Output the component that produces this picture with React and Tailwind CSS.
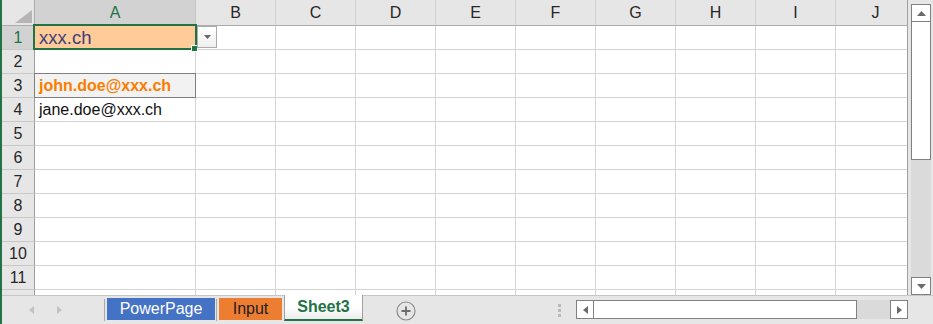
const cols = ['A', 'B', 'C', 'D', 'E', 'F', 'G', 'H', 'I', 'J'];
const rows = [1, 2, 3, 4, 5, 6, 7, 8, 9, 10, 11];

function Cell({ row, col }) {
    if (col === 'A' && row === 1) {
        return (
            <div className="flex items-center pl-[4px] pt-[1px] bg-[#ffcc99] text-[#3f3f76] text-[18.5px] border-r border-b border-[#d4d4d4]">
                xxx.ch
            </div>
        );
    }
    if (col === 'A' && row === 3) {
        return (
            <div className="flex items-center pl-[4px] bg-[#f2f2f2] text-[#fa7d00] font-bold border-r border-b border-[#d4d4d4]">
                john.doe@xxx.ch
            </div>
        );
    }
    if (col === 'A' && row === 4) {
        return (
            <div className="flex items-center pl-[4px] text-[#111] border-r border-b border-[#d4d4d4] whitespace-nowrap">
                jane.doe@xxx.ch
            </div>
        );
    }
    return <div className="border-r border-b border-[#d4d4d4]" />;
}

function Sheet() {
    return (
        <div className="relative w-[906px] h-full overflow-hidden border-r border-[#a0a0a0] bg-white">
            <div className="grid grid-cols-[33px_161px_repeat(9,80px)] grid-rows-[26px_repeat(11,24px)_5px] w-[914px] h-full">
                {/* Corner */}
                <div className="relative bg-[#e6e6e6] border-r border-b border-[#ababab]">
                    <svg className="absolute left-[13px] top-[10px]" width="17" height="13" viewBox="0 0 17 13">
                        <polygon points="17,0 17,13 0,13" fill="#b5b5b5" />
                    </svg>
                </div>
                {cols.map((c) => (
                    <div
                        key={c}
                        className={
                            c === 'A'
                                ? 'flex items-center justify-center bg-[#d2d2d2] text-[#217346] border-r border-[#c4c4c4] border-b border-b-[#ababab]'
                                : 'flex items-center justify-center bg-[#e6e6e6] text-[#262626] border-r border-[#cfcfcf] border-b border-b-[#ababab]'
                        }
                    >
                        {c}
                    </div>
                ))}

                {rows.map((r) => (
                    <div key={r} className="contents">
                        <div
                            className={
                                r === 1
                                    ? 'flex items-center justify-center bg-[#d2d2d2] text-[#217346] border-b border-[#c8c8c8] border-r border-r-[#9e9e9e]'
                                    : 'flex items-center justify-center bg-[#e6e6e6] text-[#262626] border-b border-[#c8c8c8] border-r border-r-[#9e9e9e]'
                            }
                        >
                            {r}
                        </div>
                        {cols.map((c) => (
                            <Cell key={c} row={r} col={c} />
                        ))}
                    </div>
                ))}

                <div className="bg-[#e6e6e6] border-r border-[#9e9e9e]" />
                {cols.map((c) => (
                    <div key={c} className="border-r border-[#d4d4d4]" />
                ))}
            </div>

            {/* A3 cell style border */}
            <div className="absolute left-[32px] top-[73px] w-[162px] h-[25px] border border-[#7f7f7f] pointer-events-none" />

            {/* Selection box on A1 */}
            <div className="absolute left-[31px] top-[24px] w-[164px] h-[26px] border-2 border-[#217346] pointer-events-none" />
            <div className="absolute left-[189px] top-[45px] w-[7px] h-[7px] bg-[#217346] border border-white" />

            {/* Data validation dropdown */}
            <div className="absolute left-[195px] top-[26px] w-[20px] h-[22px] border border-[#ababab] bg-linear-to-b from-white to-[#efefef] flex items-center justify-center">
                <svg width="7" height="4" viewBox="0 0 7 4">
                    <polygon points="0,0 7,0 3.5,4" fill="#666" />
                </svg>
            </div>
        </div>
    );
}

function VScroll() {
    return (
        <div className="w-[25px] h-full pl-[3px] pt-[4px]">
            <div className="w-[20px] h-[291px] flex flex-col bg-[#dadada]">
                <div className="h-[18px] bg-white border border-[#808080] flex items-center justify-center">
                    <svg width="9" height="5" viewBox="0 0 9 5">
                        <polygon points="0,5 9,5 4.5,0" fill="#6b6b6b" />
                    </svg>
                </div>
                <div className="h-[138px] bg-white border border-t-0 border-[#808080]" />
                <div className="flex-1" />
                <div className="h-[18px] bg-white border border-[#808080] flex items-center justify-center">
                    <svg width="9" height="5" viewBox="0 0 9 5">
                        <polygon points="0,0 9,0 4.5,5" fill="#6b6b6b" />
                    </svg>
                </div>
            </div>
        </div>
    );
}

function TabBar() {
    return (
        <div className="h-[29px] flex items-start border-t border-[#c6c6c6]">
            {/* Sheet navigation */}
            <div className="w-[102px] flex items-center pl-[27px] gap-[23px] mt-[10px]">
                <svg width="5" height="8" viewBox="0 0 5 8">
                    <polygon points="5,0 5,8 0,4" fill="#c2c2c2" />
                </svg>
                <svg width="5" height="8" viewBox="0 0 5 8">
                    <polygon points="0,0 0,8 5,4" fill="#c2c2c2" />
                </svg>
            </div>
            <div className="w-px h-[22px] mt-[3px] bg-[#a8a8a8]" />

            <div className="ml-[2px] mt-[2px] w-[108px] h-[22px] bg-[#4472c4] text-white flex items-center justify-center">
                PowerPage
            </div>
            <div className="ml-px w-px h-[22px] mt-[3px] bg-[#a8a8a8]" />
            <div className="ml-[2px] mt-[2px] w-[63px] h-[22px] bg-[#ed7d31] text-[#1e1e1e] flex items-center justify-center">
                Input
            </div>
            <div className="ml-[2px] -mt-px w-[79px] h-[26px] bg-linear-to-b from-white via-white to-[#ececec] border-x border-[#a0a0a0] border-b-2 border-b-[#217346] text-[#217346] font-bold flex items-center justify-center">
                Sheet3
            </div>

            {/* New sheet */}
            <svg className="ml-[33px] mt-[5px]" width="20" height="20" viewBox="0 0 20 20">
                <circle cx="10" cy="10" r="9" fill="none" stroke="#8a8a8a" strokeWidth="1.2" />
                <path d="M10 5.5v9M5.5 10h9" stroke="#6b6b6b" strokeWidth="1.8" />
            </svg>

            <div className="ml-[142px] mt-[8px] flex flex-col gap-[2px]">
                <div className="w-[3px] h-[3px] bg-[#b9b9b9]" />
                <div className="w-[3px] h-[3px] bg-[#b9b9b9]" />
                <div className="w-[3px] h-[3px] bg-[#b9b9b9]" />
            </div>

            {/* Horizontal scrollbar */}
            <div className="ml-[15px] mt-[4px] w-[332px] h-[19px] flex bg-[#dadada]">
                <div className="w-[18px] h-full bg-white border border-[#808080] flex items-center justify-center">
                    <svg width="5" height="8" viewBox="0 0 5 8">
                        <polygon points="5,0 5,8 0,4" fill="#6b6b6b" />
                    </svg>
                </div>
                <div className="w-[263px] h-full bg-white border border-l-0 border-[#808080]" />
                <div className="flex-1" />
                <div className="w-[18px] h-full bg-white border border-[#808080] flex items-center justify-center">
                    <svg width="5" height="8" viewBox="0 0 5 8">
                        <polygon points="0,0 0,8 5,4" fill="#6b6b6b" />
                    </svg>
                </div>
            </div>
        </div>
    );
}

export default function App() {
    return (
        <div className="w-[933px] h-[324px] overflow-hidden bg-[#e6e6e6] border-l-2 border-[#217346] flex flex-col font-['Liberation_Sans',Arial,sans-serif] text-[16px] leading-none">
            <div className="flex h-[295px]">
                <Sheet />
                <VScroll />
            </div>
            <TabBar />
        </div>
    );
}
